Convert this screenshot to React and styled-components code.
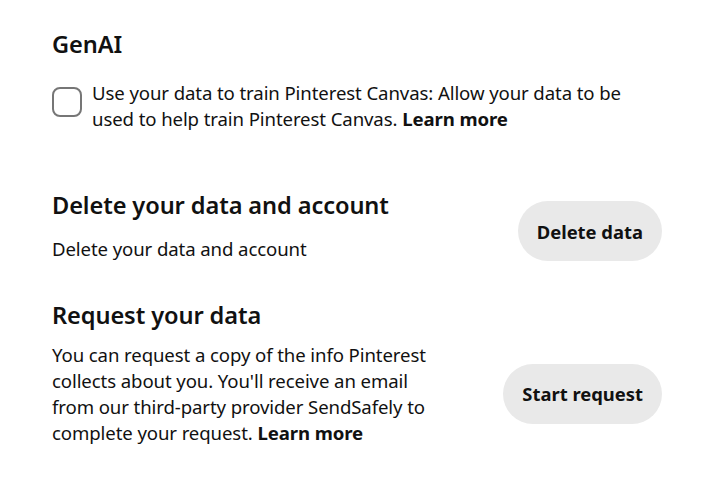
import React from "react";
import styled, { createGlobalStyle } from "styled-components";

const Global = createGlobalStyle`
  html, body { margin: 0; padding: 0; background: #fff; }
  body { font-family: "Noto Sans", "Open Sans", sans-serif; color: #111; }
`;

const Page = styled.div`
  width: 728px;
  height: 501px;
  box-sizing: border-box;
  padding: 26px 66px 0 52px;
  display: flex;
  flex-direction: column;
`;

const Heading = styled.h2`
  margin: 0;
  font-size: 23.6px;
  font-weight: 600;
  line-height: 36px;
  letter-spacing: -0.1px;
`;

const Text = styled.p`
  margin: 0;
  font-size: 18.6px;
  line-height: 26px;
  letter-spacing: -0.1px;
  b { font-weight: 700; }
`;

const CheckRow = styled.label`
  display: flex;
  align-items: flex-start;
  gap: 10px;
  margin-top: 18px;
`;

const Box = styled.span`
  flex: none;
  width: 30px;
  height: 30px;
  box-sizing: border-box;
  border: 2px solid #767676;
  border-radius: 8px;
  margin-top: 7px;
`;

const Section = styled.div`
  display: flex;
  align-items: center;
  justify-content: space-between;
  margin-top: ${(p) => p.$top}px;
`;

const Col = styled.div`
  display: flex;
  flex-direction: column;
  gap: ${(p) => p.$gap}px;
  width: ${(p) => p.$w || "auto"};
`;

const Button = styled.button`
  flex: none;
  border: none;
  background: #e9e9e9;
  border-radius: 30px;
  height: 60px;
  padding: 0 19px;
  font-family: inherit;
  font-size: 18.4px;
  font-weight: 700;
  color: #111;
  margin-top: ${(p) => p.$top || 0}px;
`;

export default function App() {
  return (
    <>
      <Global />
      <Page>
        <Heading>GenAI</Heading>
        <CheckRow>
          <Box />
          <Text>
            Use your data to train Pinterest Canvas: Allow your data to be used
            to help train Pinterest Canvas. <b>Learn more</b>
          </Text>
        </CheckRow>
        <Section $top={55}>
          <Col $gap={13}>
            <Heading>Delete your data and account</Heading>
            <Text>Delete your data and account</Text>
          </Col>
          <Button $top={13}>Delete data</Button>
        </Section>
        <Section $top={35}>
          <Col $gap={9} $w="390px">
            <Heading>Request your data</Heading>
            <Text>
              You can request a copy of the info Pinterest collects about you.
              You'll receive an email from our third-party provider SendSafely
              to complete your request. <b>Learn more</b>
            </Text>
          </Col>
          <Button $top={44}>Start request</Button>
        </Section>
      </Page>
    </>
  );
}
